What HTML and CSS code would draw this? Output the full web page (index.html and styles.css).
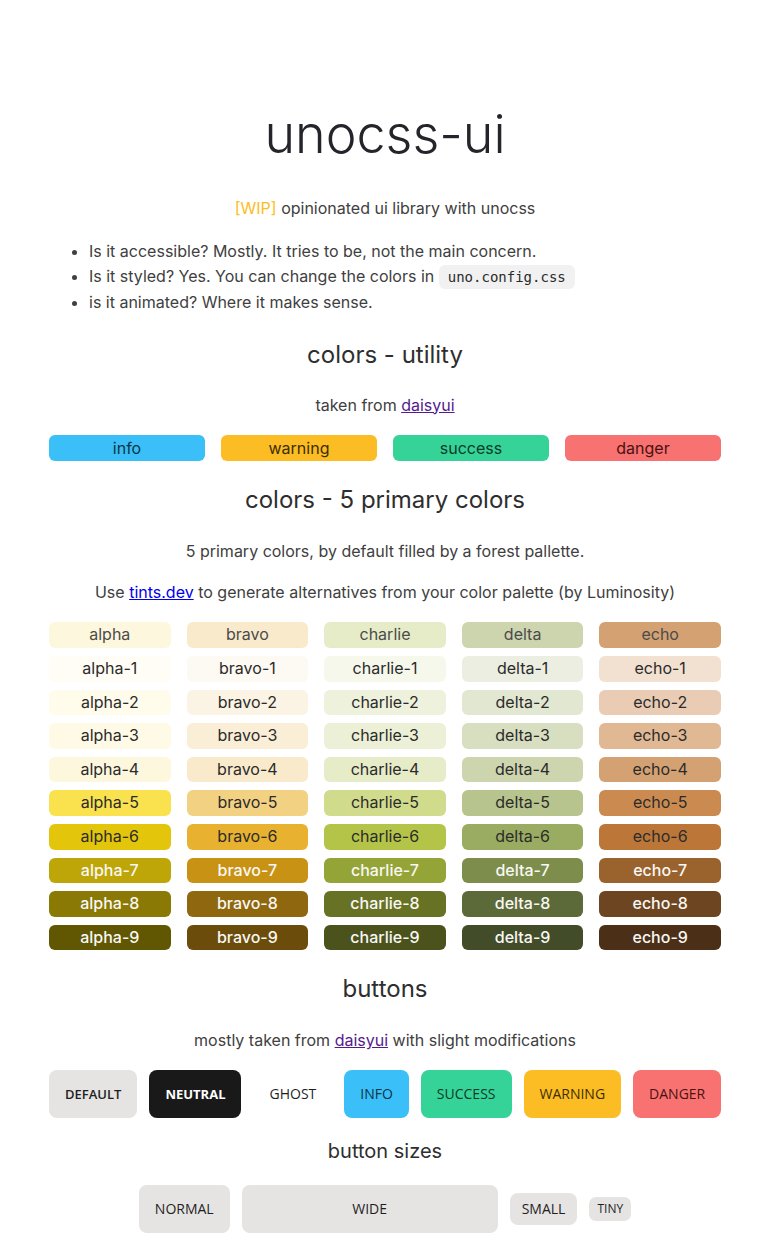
FILE: index.html
```html
<!DOCTYPE html>
<html lang="en">
<head>
<meta charset="utf-8">
<title>unocss-ui</title>
<link rel="stylesheet" href="styles.css">
</head>
<body>
<main class="page">
  <h1 class="title">unocss-ui</h1>
  <p class="lead"><span class="wip">[WIP]</span> opinionated ui library with unocss</p>
  <ul class="faq">
    <li>Is it accessible? Mostly. It tries to be, not the main concern.</li>
    <li>Is it styled? Yes. You can change the colors in <code class="code">uno.config.css</code></li>
    <li>is it animated? Where it makes sense.</li>
  </ul>

  <h2 class="h2 h2-first">colors - utility</h2>
  <p class="text after-h2">taken from <a class="visited" href="#">daisyui</a></p>
  <div class="util-grid">
    <div class="util info">info</div>
    <div class="util warning">warning</div>
    <div class="util success">success</div>
    <div class="util danger">danger</div>
  </div>

  <h2 class="h2 h2-next">colors - 5 primary colors</h2>
  <p class="text after-h2c">5 primary colors, by default filled by a forest pallette.</p>
  <p class="text second">Use <a class="link" href="#">tints.dev</a> to generate alternatives from your color palette (by Luminosity)</p>

  <div class="palette">
    <div class="sw alpha">alpha</div><div class="sw bravo">bravo</div><div class="sw charlie">charlie</div><div class="sw delta">delta</div><div class="sw echo">echo</div>
    <div class="sw dk alpha-1">alpha-1</div><div class="sw dk bravo-1">bravo-1</div><div class="sw dk charlie-1">charlie-1</div><div class="sw dk delta-1">delta-1</div><div class="sw dk echo-1">echo-1</div>
    <div class="sw dk alpha-2">alpha-2</div><div class="sw dk bravo-2">bravo-2</div><div class="sw dk charlie-2">charlie-2</div><div class="sw dk delta-2">delta-2</div><div class="sw dk echo-2">echo-2</div>
    <div class="sw dk alpha-3">alpha-3</div><div class="sw dk bravo-3">bravo-3</div><div class="sw dk charlie-3">charlie-3</div><div class="sw dk delta-3">delta-3</div><div class="sw dk echo-3">echo-3</div>
    <div class="sw dk alpha-4">alpha-4</div><div class="sw dk bravo-4">bravo-4</div><div class="sw dk charlie-4">charlie-4</div><div class="sw dk delta-4">delta-4</div><div class="sw dk echo-4">echo-4</div>
    <div class="sw dk alpha-5">alpha-5</div><div class="sw dk bravo-5">bravo-5</div><div class="sw dk charlie-5">charlie-5</div><div class="sw dk delta-5">delta-5</div><div class="sw dk echo-5">echo-5</div>
    <div class="sw dk alpha-6">alpha-6</div><div class="sw dk bravo-6">bravo-6</div><div class="sw dk charlie-6">charlie-6</div><div class="sw dk delta-6">delta-6</div><div class="sw dk echo-6">echo-6</div>
    <div class="sw lt alpha-7">alpha-7</div><div class="sw lt bravo-7">bravo-7</div><div class="sw lt charlie-7">charlie-7</div><div class="sw lt delta-7">delta-7</div><div class="sw lt echo-7">echo-7</div>
    <div class="sw lt alpha-8">alpha-8</div><div class="sw lt bravo-8">bravo-8</div><div class="sw lt charlie-8">charlie-8</div><div class="sw lt delta-8">delta-8</div><div class="sw lt echo-8">echo-8</div>
    <div class="sw lt alpha-9">alpha-9</div><div class="sw lt bravo-9">bravo-9</div><div class="sw lt charlie-9">charlie-9</div><div class="sw lt delta-9">delta-9</div><div class="sw lt echo-9">echo-9</div>
  </div>

  <h2 class="h2 h2-buttons">buttons</h2>
  <p class="text after-h2b">mostly taken from <a class="visited" href="#">daisyui</a> with slight modifications</p>
  <div class="btn-row">
    <button class="btn btn-default btn-strong">DEFAULT</button>
    <button class="btn btn-neutral">NEUTRAL</button>
    <button class="btn btn-ghost">GHOST</button>
    <button class="btn btn-info">INFO</button>
    <button class="btn btn-success">SUCCESS</button>
    <button class="btn btn-warning">WARNING</button>
    <button class="btn btn-danger">DANGER</button>
  </div>

  <h3 class="h3">button sizes</h3>
  <div class="size-row">
    <button class="btn btn-default">NORMAL</button>
    <button class="btn btn-default btn-wide">WIDE</button>
    <button class="btn btn-default btn-sm">SMALL</button>
    <button class="btn btn-default btn-xs">TINY</button>
  </div>
</main>
</body>
</html>
```

FILE: styles.css
```css
* { box-sizing: border-box; }

body {
  margin: 0;
  background: #ffffff;
  font-family: Inter, "Liberation Sans", sans-serif;
  color: #404040;
  font-size: 16px;
}

.page {
  max-width: 672px;
  margin: 0 auto;
  padding-top: 103px;
  padding-bottom: 16px;
  display: flex;
  flex-direction: column;
}

.title {
  margin: 0;
  font-size: 52px;
  line-height: 64px;
  font-weight: 300;
  color: #24242a;
  text-align: center;
}

.lead {
  margin: 29px 0 0;
  line-height: 25.6px;
  text-align: center;
}

.wip { color: #fbbd23; }

.faq {
  margin: 17px 0 0;
  padding-left: 40px;
}

.faq li { line-height: 25px; }

.code {
  font-family: "DejaVu Sans Mono", "Liberation Mono", monospace;
  font-size: 14px;
  background: #f1f1f2;
  border-radius: 6px;
  padding: 4px 9px;
  color: #2a2a2a;
}

.h2 {
  margin: 0;
  font-size: 24px;
  line-height: 32px;
  font-weight: 400;
  color: #2e2e2e;
  text-align: center;
}

.h2-first { margin-top: 24px; }
.h2-next { margin-top: 23px; }
.h2-buttons { margin-top: 23px; }

.h3 {
  margin: 19px 0 0;
  font-size: 20px;
  line-height: 28px;
  font-weight: 400;
  color: #2e2e2e;
  text-align: center;
}

.text {
  margin: 0;
  line-height: 25.6px;
  text-align: center;
}

.after-h2 { margin-top: 22px; }
.after-h2c { margin-top: 23px; }
.after-h2b { margin-top: 23px; }
.second { margin-top: 15px; }

.visited { color: #551a8b; }
.link { color: #0000ee; }

.util-grid {
  margin-top: 17px;
  display: grid;
  grid-template-columns: repeat(4, 1fr);
  gap: 16px;
}

.util {
  height: 26px;
  line-height: 26px;
  border-radius: 6px;
  text-align: center;
}

.info { background: #3abff8; color: #0b3547; }
.warning { background: #fbbd23; color: #3d2e06; }
.success { background: #36d399; color: #0a3a27; }
.danger { background: #f87272; color: #4a1111; }

.palette {
  margin-top: 17px;
  display: grid;
  grid-template-columns: repeat(5, 1fr);
  gap: 8px 16px;
}

.sw {
  height: 25.6px;
  line-height: 25.6px;
  border-radius: 6px;
  text-align: center;
  color: #4b4b4b;
}

.sw.dk { color: #2b2b2b; }
.sw.lt { color: #f8f8f4; font-weight: 500; }

.alpha { background: #fdf8dd; }
.alpha-1 { background: #fffdf6; }
.alpha-2 { background: #fffceb; }
.alpha-3 { background: #fefae5; }
.alpha-4 { background: #fdf8dd; }
.alpha-5 { background: #f9e24e; }
.alpha-6 { background: #e3c50b; }
.alpha-7 { background: #bea508; }
.alpha-8 { background: #8b7905; }
.alpha-9 { background: #615602; }

.bravo { background: #f9eacc; }
.bravo-1 { background: #fdfaf3; }
.bravo-2 { background: #fbf3e3; }
.bravo-3 { background: #faeed7; }
.bravo-4 { background: #f9eacc; }
.bravo-5 { background: #f2d282; }
.bravo-6 { background: #e8b230; }
.bravo-7 { background: #c89214; }
.bravo-8 { background: #8f670e; }
.bravo-9 { background: #6b4c0a; }

.charlie { background: #e6ecc8; }
.charlie-1 { background: #f6f8ec; }
.charlie-2 { background: #eef2dc; }
.charlie-3 { background: #ebf0d6; }
.charlie-4 { background: #e6ecc8; }
.charlie-5 { background: #d1db8c; }
.charlie-6 { background: #b4c448; }
.charlie-7 { background: #95a436; }
.charlie-8 { background: #687224; }
.charlie-9 { background: #4b521c; }

.delta { background: #cdd5ae; }
.delta-1 { background: #eceee2; }
.delta-2 { background: #e2e7d1; }
.delta-3 { background: #d8dec0; }
.delta-4 { background: #cdd5ae; }
.delta-5 { background: #b7c48e; }
.delta-6 { background: #9aac62; }
.delta-7 { background: #7d8d4c; }
.delta-8 { background: #5c6a39; }
.delta-9 { background: #424c28; }

.echo { background: #d4a172; }
.echo-1 { background: #f2e0d1; }
.echo-2 { background: #e9ccb3; }
.echo-3 { background: #e0b894; }
.echo-4 { background: #d4a172; }
.echo-5 { background: #cb8b50; }
.echo-6 { background: #bc7738; }
.echo-7 { background: #9a632e; }
.echo-8 { background: #6d4621; }
.echo-9 { background: #4b3017; }

.btn-row {
  margin-top: 16px;
  display: flex;
  gap: 12px;
}

.size-row {
  margin-top: 20px;
  display: flex;
  justify-content: center;
  align-items: center;
  gap: 12px;
}

.btn {
  height: 48px;
  padding: 0 16px;
  border: none;
  border-radius: 8px;
  font-family: "Open Sans", "Noto Sans", sans-serif;
  font-size: 14px;
  font-weight: 400;
  color: #1f1f1f;
  display: inline-flex;
  align-items: center;
  justify-content: center;
}

.btn-default { background: #e5e4e3; }
.btn-strong { font-size: 13px; font-weight: 600; }
.btn-neutral { background: #191919; color: #ffffff; font-size: 13px; font-weight: 700; }
.btn-ghost { background: transparent; }
.btn-info { background: #3abff8; color: #0b3547; }
.btn-success { background: #36d399; color: #0a3a27; }
.btn-warning { background: #fbbd23; color: #3d2e06; }
.btn-danger { background: #f87272; color: #4a1111; }

.btn-wide { width: 256px; }
.btn-sm { height: 32px; padding: 0 12px; }
.btn-xs { height: 24px; padding: 0 8px; font-size: 12px; border-radius: 7px; }
```
